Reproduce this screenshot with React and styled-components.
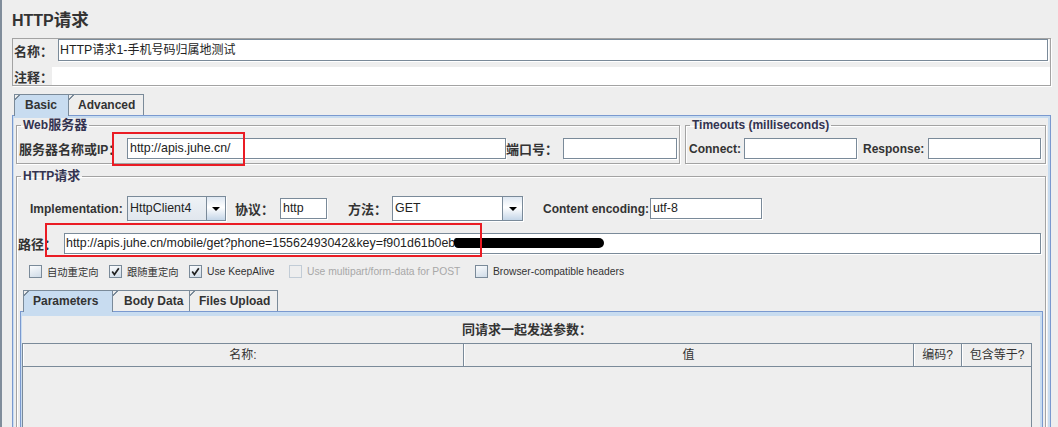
import React from "react";
import styled, { createGlobalStyle } from "styled-components";

const FONT = `"Liberation Sans", Arial, "Noto Sans CJK SC", sans-serif`;
const EDGE = "#7a8a99";
const BLUE = "#7a99cf";
const BAND = "#c8dcf0";

const Global = createGlobalStyle`
  html, body { margin: 0; padding: 0; background: #eeeeee; }
  body { font-family: ${FONT}; }
  *, *::before, *::after { box-sizing: border-box; }
`;

const Page = styled.div`
  position: relative;
  width: 1058px;
  height: 427px;
  overflow: hidden;
  background: #eeeeee;
  border-left: 2px solid #808d9b;
  padding: 0 7px 0 10px;
  font-family: ${FONT};
  color: #333;
`;

const Zh = styled.span`
  font-size: ${(p) => p.$size || 13}px;
`;

const Title = styled.h1`
  margin: 0 0 5px;
  padding-top: 8px;
  font: bold 16px/24px ${FONT};
  color: #333;
`;

const NameBox = styled.div`
  border: 1px solid #a3a3a3;
  box-shadow: 1px 1px 0 #fff;
  padding: 0;
`;

const Row = styled.div`
  display: flex;
  align-items: center;
  height: ${(p) => p.$h || 21}px;
  margin-top: ${(p) => p.$mt || 0}px;
  margin-left: ${(p) => p.$ml || 0}px;
  margin-right: ${(p) => p.$mr || 0}px;
`;

const Label = styled.span`
  flex: none;
  width: ${(p) => (p.$w ? `${p.$w}px` : "auto")};
  margin-left: ${(p) => p.$ml || 0}px;
  font: bold 12px ${FONT};
  color: #333;
  white-space: nowrap;
`;

const Field = styled.div`
  flex: ${(p) => (p.$w ? "none" : "1")};
  width: ${(p) => (p.$w ? `${p.$w}px` : "auto")};
  height: ${(p) => p.$h || 21}px;
  margin-right: ${(p) => p.$mr || 0}px;
  background: #fff;
  border: 1px solid ${EDGE};
  box-shadow: 1px 1px 0 #fff;
  padding: 0 ${(p) => p.$pl ?? 2}px;
  font: 12.4px/${(p) => (p.$h || 21) - 2}px ${FONT};
  color: #222;
  white-space: nowrap;
  overflow: hidden;
`;

const Blank = styled.div`
  flex: 1;
  height: 100%;
  background: #fff;
`;

const Blot = styled.span`
  display: inline-block;
  width: 150px;
  height: 10px;
  margin-left: -1px;
  vertical-align: -1px;
  background: #000;
  border-radius: 3px 6px 6px 5px / 4px 6px 6px 5px;
`;

const TabStrip = styled.div`
  display: flex;
  height: 21px;
  margin-top: ${(p) => p.$mt || 0}px;
  margin-left: ${(p) => p.$ml || 0}px;
  padding-left: ${(p) => p.$pl || 0}px;
`;

const Tab = styled.div`
  position: relative;
  z-index: ${(p) => (p.$active ? 2 : 1)};
  flex: none;
  width: ${(p) => p.$w}px;
  height: ${(p) => (p.$active ? 22 : 21)}px;
  margin-right: -1px;
  padding: 0 0 0 ${(p) => p.$pl || 10}px;
  border: 1px solid ${EDGE};
  border-bottom: none;
  background: ${(p) => (p.$active ? BAND : "#eeeeee")};
  font: bold 12px/20px ${FONT};
  color: #333;
  white-space: nowrap;
  overflow: hidden;

  &::before {
    content: "";
    position: absolute;
    top: -1px;
    left: -1px;
    width: 7px;
    height: 7px;
    background: linear-gradient(
      to bottom right,
      #eeeeee 0,
      #eeeeee calc(50% - 0.8px),
      ${EDGE} calc(50% - 0.8px),
      ${EDGE} calc(50% + 0.6px),
      transparent calc(50% + 0.6px)
    );
  }
`;

const TabPanel = styled.div`
  display: flex;
  flex-direction: column;
  min-height: 330px;
  border: 1px solid ${BLUE};
  box-shadow: inset 0 2px 0 ${BAND}, inset 1px 0 0 ${BAND}, inset -2px 0 0 ${BAND};
  padding: 1px 4px 0 3px;
`;

const GroupRow = styled.div`
  display: flex;
  gap: 5px;
`;

const Group = styled.fieldset`
  margin: ${(p) => p.$mt || 0}px 0 0;
  min-width: 0;
  width: ${(p) => (p.$w ? `${p.$w}px` : "auto")};
  flex: ${(p) => (p.$w ? "none" : "1")};
  min-height: ${(p) => p.$minh || 0}px;
  border: 1px solid #a3a3a3;
  box-shadow: inset 1px 1px 0 #fff, 1px 1px 0 #fff;
  padding: ${(p) => p.$pad};
`;

const Legend = styled.legend`
  margin-left: 4px;
  padding: 0 2px;
  font: bold 12px/16px ${FONT};
  color: #333350;
`;

const Combo = styled.div`
  flex: none;
  display: flex;
  width: ${(p) => p.$w}px;
  height: 25px;
  border: 1px solid ${EDGE};
  box-shadow: 1px 1px 0 #fff;
`;

const ComboText = styled.div`
  flex: 1;
  padding-left: 2px;
  background: ${(p) =>
    p.$editable ? "#fff" : "linear-gradient(#eef2f6, #e1e7ee)"};
  font: 12.4px/23px ${FONT};
  color: #222;
`;

const Arrow = styled.div`
  flex: none;
  width: ${(p) => p.$w || 19}px;
  display: flex;
  align-items: center;
  justify-content: center;
  border-left: 1px solid ${EDGE};
  background: linear-gradient(#dfe8f2, #ffffff 45%, #c5d6e8);

  &::after {
    content: "";
    border-left: 4px solid transparent;
    border-right: 4px solid transparent;
    border-top: 4px solid #000;
  }
`;

const CheckItem = styled.div`
  flex: none;
  display: flex;
  align-items: center;
  width: ${(p) => (p.$w ? `${p.$w}px` : "auto")};
`;

const Box = styled.span`
  flex: none;
  width: 13px;
  height: 13px;
  display: flex;
  align-items: center;
  justify-content: center;
  border: 1px solid ${(p) => (p.$disabled ? "#c2ccd6" : EDGE)};
  background: ${(p) =>
    p.$disabled ? "#eeeeee" : "linear-gradient(160deg, #fbfcfd, #cfdbe7)"};
`;

const CheckText = styled.span`
  margin-left: 5px;
  font: 10.3px ${FONT};
  color: ${(p) => (p.$disabled ? "#a8a8a8" : "#333")};
  white-space: nowrap;
`;

const InnerPanel = styled.div`
  display: flex;
  flex-direction: column;
  min-height: 130px;
  margin: 0 2px 0 3px;
  border: 1px solid ${BLUE};
  border-bottom: none;
  box-shadow: inset 0 4px 0 ${BAND}, inset 1px 0 0 ${BAND}, inset -2px 0 0 ${BAND};
  padding: 0 10px 0 1px;
`;

const Caption = styled.div`
  margin-top: 10px;
  font: bold 13px/16px ${FONT};
  color: #333;
  text-align: center;
`;

const Table = styled.div`
  margin-top: 5px;
  flex: 1;
  border: 1px solid ${EDGE};
  border-bottom: none;
  display: flex;
  flex-direction: column;
`;

const HeadRow = styled.div`
  display: flex;
  border-bottom: 1px solid ${EDGE};
`;

const HeadCell = styled.div`
  flex: none;
  width: ${(p) => p.$w}px;
  height: 22px;
  border-right: 1px solid ${EDGE};
  box-shadow: inset 1px 0 0 #fff;
  font: 12px/22px ${FONT};
  color: #333;
  text-align: center;
  &:last-child {
    border-right: none;
  }
`;

const TableBody = styled.div`
  flex: 1;
  min-height: 80px;
`;

const RedBox = styled.div`
  position: absolute;
  left: ${(p) => p.$x}px;
  top: ${(p) => p.$y}px;
  width: ${(p) => p.$w}px;
  height: ${(p) => p.$h}px;
  border: 2px solid #ea1c24;
  pointer-events: none;
`;

function Check({ checked, disabled, w, children }) {
  return (
    <CheckItem $w={w}>
      <Box $disabled={disabled}>
        {checked && (
          <svg width="9" height="9" viewBox="0 0 9 9">
            <path
              d="M1.2 4.6 L3.4 7.6 L7.8 1.2"
              fill="none"
              stroke="#222"
              strokeWidth="1.7"
            />
          </svg>
        )}
      </Box>
      <CheckText $disabled={disabled}>{children}</CheckText>
    </CheckItem>
  );
}

export default function App() {
  return (
    <>
      <Global />
      <Page>
        <Title>
          HTTP<Zh $size={17.5}>请求</Zh>
        </Title>

        <NameBox>
          <Row $h={22}>
            <Label $w={44} $ml={1}>
              <Zh>名称：</Zh>
            </Label>
            <Field $h={22} $pl={1} $mr={2}>
              HTTP<Zh $size={12}>请求</Zh>1-<Zh $size={12}>手机号码归属地测试</Zh>
            </Field>
          </Row>
          <Row $h={18} $mt={6}>
            <Label $w={38} $ml={1}>
              <Zh>注释：</Zh>
            </Label>
            <Blank />
          </Row>
        </NameBox>

        <TabStrip $mt={8} $pl={2}>
          <Tab $active $w={55}>
            Basic
          </Tab>
          <Tab $w={76} $pl={9}>
            Advanced
          </Tab>
        </TabStrip>

        <TabPanel>
          <GroupRow>
            <Group $w={664} $pad="5px 0 4px 0">
              <Legend>
                Web<Zh>服务器</Zh>
              </Legend>
              <Row $h={21}>
                <Label $w={108} $ml={2}>
                  <Zh>服务器名称或</Zh>IP<Zh>：</Zh>
                </Label>
                <Field $w={379}>http://apis.juhe.cn/</Field>
                <Label $w={57}>
                  <Zh>端口号：</Zh>
                </Label>
                <Field $w={114} />
              </Row>
            </Group>
            <Group $w={361} $pad="5px 0 4px 0">
              <Legend>Timeouts (milliseconds)</Legend>
              <Row $h={21}>
                <Label $w={55} $ml={3}>
                  Connect:
                </Label>
                <Field $w={113} />
                <Label $w={65} $ml={6}>
                  Response:
                </Label>
                <Field $w={113} />
              </Row>
            </Group>
          </GroupRow>

          <Group $mt={4} $minh={300} $pad="12px 0 0 0">
            <Legend>
              HTTP<Zh>请求</Zh>
            </Legend>
            <Row $h={25} $ml={13}>
              <Label $w={97}>Implementation:</Label>
              <Combo $w={99}>
                <ComboText>HttpClient4</ComboText>
                <Arrow />
              </Combo>
              <Label $w={45} $ml={9}>
                <Zh>协议：</Zh>
              </Label>
              <Field $w={47}>http</Field>
              <Label $w={44} $ml={21}>
                <Zh>方法：</Zh>
              </Label>
              <Combo $w={131}>
                <ComboText $editable>GET</ComboText>
                <Arrow $w={20} />
              </Combo>
              <Label $w={107} $ml={20}>
                Content encoding:
              </Label>
              <Field $w={112}>utf-8</Field>
            </Row>

            <Row $h={21} $mt={12} $ml={1}>
              <Label $w={46}>
                <Zh>路径：</Zh>
              </Label>
              <Field $pl={1} $mr={4}>
                http://apis.juhe.cn/mobile/get?phone=15562493042&amp;key=f901d61b0eb
                <Blot />
              </Field>
            </Row>

            <Row $h={13} $mt={11} $ml={12}>
              <Check w={80}>自动重定向</Check>
              <Check w={80} checked>
                跟随重定向
              </Check>
              <Check w={100} checked>
                Use KeepAlive
              </Check>
              <Check w={186} disabled>
                Use multipart/form-data for POST
              </Check>
              <Check>Browser-compatible headers</Check>
            </Row>

            <TabStrip $mt={12} $ml={3} $pl={3}>
              <Tab $active $w={90} $pl={9}>
                Parameters
              </Tab>
              <Tab $w={78} $pl={11}>
                Body Data
              </Tab>
              <Tab $w={89} $pl={9}>
                Files Upload
              </Tab>
            </TabStrip>
            <InnerPanel>
              <Caption>同请求一起发送参数：</Caption>
              <Table>
                <HeadRow>
                  <HeadCell $w={441}>名称:</HeadCell>
                  <HeadCell $w={450}>值</HeadCell>
                  <HeadCell $w={48}>编码?</HeadCell>
                  <HeadCell $w={70}>包含等于?</HeadCell>
                </HeadRow>
                <TableBody />
              </Table>
            </InnerPanel>
          </Group>
        </TabPanel>

        <RedBox $x={110} $y={132} $w={133} $h={34} />
        <RedBox $x={43} $y={223} $w={437} $h={34} />
      </Page>
    </>
  );
}
